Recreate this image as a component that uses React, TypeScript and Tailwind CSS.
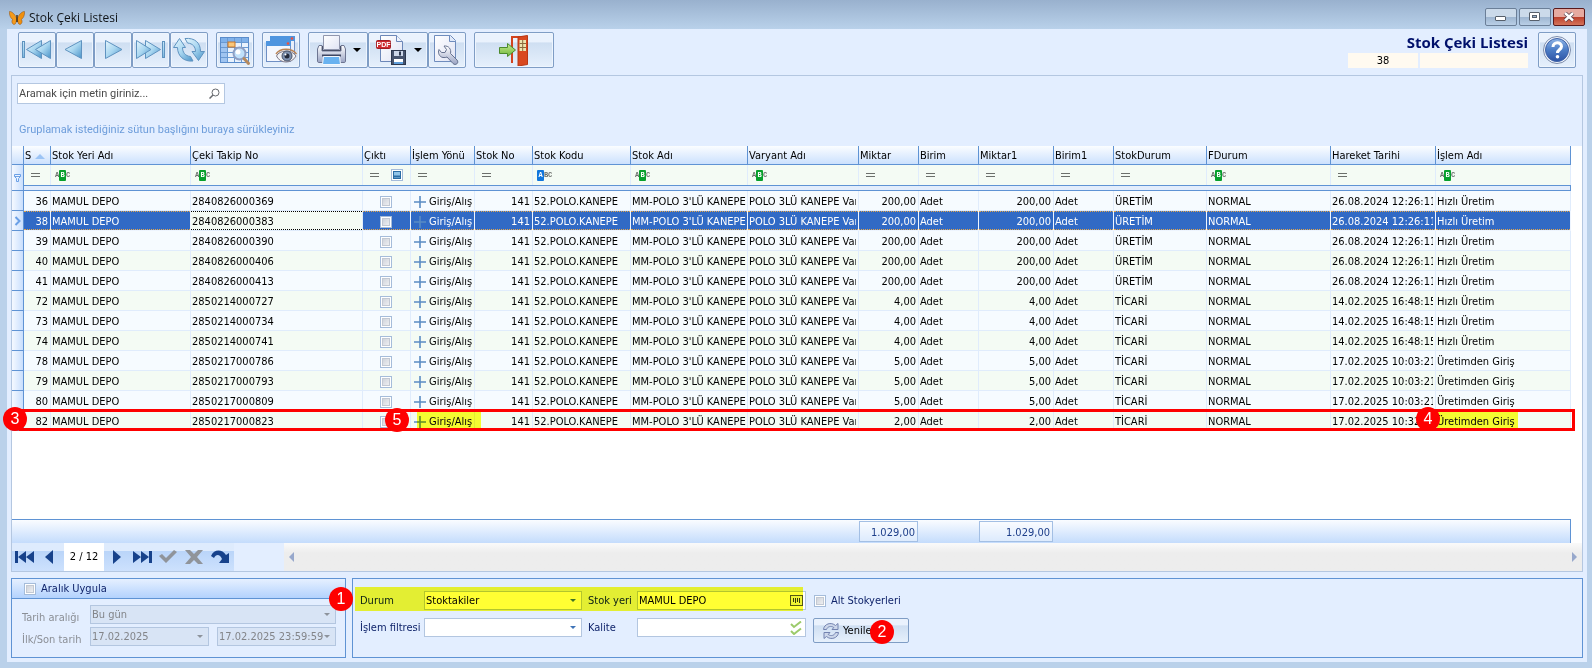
import { Fragment } from 'react'
import type { ReactNode } from 'react'

type Column = {
  title: string
  width: string
  filter: 'eq' | 'abc' | 'start'
}

const columns: Column[] = [
  { title: 'S', width: 'w-[27px]', filter: 'eq' },
  { title: 'Stok Yeri Adı', width: 'w-[140px]', filter: 'abc' },
  { title: 'Çeki Takip No', width: 'w-[172px]', filter: 'abc' },
  { title: 'Çıktı', width: 'w-[48px]', filter: 'eq' },
  { title: 'İşlem Yönü', width: 'w-[64px]', filter: 'eq' },
  { title: 'Stok No', width: 'w-[58px]', filter: 'eq' },
  { title: 'Stok Kodu', width: 'w-[98px]', filter: 'start' },
  { title: 'Stok Adı', width: 'w-[117px]', filter: 'abc' },
  { title: 'Varyant Adı', width: 'w-[111px]', filter: 'abc' },
  { title: 'Miktar', width: 'w-[60px]', filter: 'eq' },
  { title: 'Birim', width: 'w-[60px]', filter: 'eq' },
  { title: 'Miktar1', width: 'w-[75px]', filter: 'eq' },
  { title: 'Birim1', width: 'w-[60px]', filter: 'eq' },
  { title: 'StokDurum', width: 'w-[93px]', filter: 'eq' },
  { title: 'FDurum', width: 'w-[124px]', filter: 'abc' },
  { title: 'Hareket Tarihi', width: 'w-[105px]', filter: 'eq' },
  { title: 'İşlem Adı', width: 'w-auto', filter: 'abc' },
]

const rows = [
  { id: 36, no: '2840826000369', qty: '200,00', status: 'ÜRETİM', date: '26.08.2024 12:26:11', op: 'Hızlı Üretim' },
  { id: 38, no: '2840826000383', qty: '200,00', status: 'ÜRETİM', date: '26.08.2024 12:26:11', op: 'Hızlı Üretim' },
  { id: 39, no: '2840826000390', qty: '200,00', status: 'ÜRETİM', date: '26.08.2024 12:26:11', op: 'Hızlı Üretim' },
  { id: 40, no: '2840826000406', qty: '200,00', status: 'ÜRETİM', date: '26.08.2024 12:26:11', op: 'Hızlı Üretim' },
  { id: 41, no: '2840826000413', qty: '200,00', status: 'ÜRETİM', date: '26.08.2024 12:26:11', op: 'Hızlı Üretim' },
  { id: 72, no: '2850214000727', qty: '4,00', status: 'TİCARİ', date: '14.02.2025 16:48:15', op: 'Hızlı Üretim' },
  { id: 73, no: '2850214000734', qty: '4,00', status: 'TİCARİ', date: '14.02.2025 16:48:15', op: 'Hızlı Üretim' },
  { id: 74, no: '2850214000741', qty: '4,00', status: 'TİCARİ', date: '14.02.2025 16:48:15', op: 'Hızlı Üretim' },
  { id: 78, no: '2850217000786', qty: '5,00', status: 'TİCARİ', date: '17.02.2025 10:03:21', op: 'Üretimden Giriş' },
  { id: 79, no: '2850217000793', qty: '5,00', status: 'TİCARİ', date: '17.02.2025 10:03:21', op: 'Üretimden Giriş' },
  { id: 80, no: '2850217000809', qty: '5,00', status: 'TİCARİ', date: '17.02.2025 10:03:21', op: 'Üretimden Giriş' },
  { id: 82, no: '2850217000823', qty: '2,00', status: 'TİCARİ', date: '17.02.2025 10:32:05', op: 'Üretimden Giriş' },
]

const SELECTED_ID = 38

const checkboxClass =
  'size-3 shrink-0 appearance-none border border-[#a5bcda] bg-linear-to-br from-[#c6cbd4] to-[#f8f8f9] shadow-[inset_0_0_0_1px_#fff,inset_0_0_0_2px_#c3c9d3]'

function Gradients() {
  return (
    <svg width="0" height="0" className="absolute" aria-hidden="true">
      <defs>
        <linearGradient id="sky" x1="0" y1="0" x2="1" y2="1">
          <stop offset="0" stopColor="#e6f6fd" />
          <stop offset="0.5" stopColor="#a8d6f0" />
          <stop offset="1" stopColor="#4a93c8" />
        </linearGradient>
        <linearGradient id="steel" x1="0" y1="0" x2="0" y2="1">
          <stop offset="0" stopColor="#ffffff" />
          <stop offset="1" stopColor="#9aa4c4" />
        </linearGradient>
        <linearGradient id="paper" x1="0" y1="0" x2="1" y2="1">
          <stop offset="0" stopColor="#ffffff" />
          <stop offset="1" stopColor="#dfe3f4" />
        </linearGradient>
        <linearGradient id="help" x1="0" y1="0" x2="0" y2="1">
          <stop offset="0" stopColor="#8fb4e6" />
          <stop offset="0.5" stopColor="#4b7cc6" />
          <stop offset="1" stopColor="#2c53a4" />
        </linearGradient>
        <linearGradient id="leaf" x1="0" y1="0" x2="0" y2="1">
          <stop offset="0" stopColor="#c6e88e" />
          <stop offset="1" stopColor="#6fb83c" />
        </linearGradient>
      </defs>
    </svg>
  )
}

function Icon({ children, size = 32, className = '' }: { children: ReactNode; size?: number; className?: string }) {
  return (
    <svg width={size} height={size} viewBox={`0 0 ${size} ${size}`} className={`shrink-0 ${className}`} aria-hidden="true">
      {children}
    </svg>
  )
}

function FirstIcon() {
  return (
    <Icon>
      <g fill="url(#sky)" stroke="#5f93c0">
        <rect x="1.5" y="7.5" width="2" height="16" />
        <path d="M20.5 6.5V24.5L5.5 15.5Z" />
        <path d="M29.5 6.5V24.5L14.5 15.5Z" />
      </g>
    </Icon>
  )
}

function PrevIcon() {
  return (
    <Icon>
      <path d="M22.5 6.5V24.5L6 15.5Z" fill="url(#sky)" stroke="#5f93c0" />
    </Icon>
  )
}

function NextIcon() {
  return (
    <Icon>
      <path d="M8.5 6.5V24.5L25 15.5Z" fill="url(#sky)" stroke="#5f93c0" />
    </Icon>
  )
}

function LastIcon() {
  return (
    <Icon>
      <g fill="url(#sky)" stroke="#5f93c0">
        <rect x="27.5" y="7.5" width="2" height="16" />
        <path d="M10.5 6.5V24.5L25.5 15.5Z" />
        <path d="M1.5 6.5V24.5L16 15.5Z" />
      </g>
    </Icon>
  )
}

function ReloadIcon() {
  return (
    <Icon>
      <g fill="url(#sky)" stroke="#5f93c0" strokeLinejoin="round">
        <path d="M6.5 4.5L12.5 13.5H9.5C9.5 18 12 22 17.5 22.5L20 27C11 28 4.5 22 4.5 13.5H0.5Z" />
        <path d="M25.5 26.5L31.5 17.5H27.5C27.5 9 22 3.5 12 4.5L14.5 9C20 9.5 22.5 13 22.5 17.5H19Z" />
      </g>
    </Icon>
  )
}

function GridSearchIcon() {
  return (
    <Icon>
      <rect x="1.5" y="3.5" width="28" height="25" fill="#e9f2fd" stroke="#5a8ccb" />
      <rect x="2" y="4" width="27" height="4" fill="#7fb1ea" />
      <rect x="2" y="8" width="6" height="20" fill="#9fc4f0" />
      <path d="M8.5 4V28M15.5 4V28M22.5 4V28M2 8.5H29M2 13.5H29M2 18.5H29M2 23.5H29" stroke="#6a9ad2" />
      <rect x="9" y="8" width="7" height="5" fill="#f9c77a" stroke="#c8762b" />
      <circle cx="20.5" cy="19.5" r="6" fill="#bfe0fb" stroke="#8e9fc4" strokeWidth="2" />
      <circle cx="19" cy="18" r="2.5" fill="#ffffff" />
      <path d="M25 24.5L29.5 29.5" stroke="#b58a5f" strokeWidth="3" strokeLinecap="round" />
    </Icon>
  )
}

function PreviewIcon() {
  return (
    <Icon>
      <rect x="5.5" y="2.5" width="24" height="20" fill="#e9effa" stroke="#6f8fc4" />
      <rect x="5" y="2" width="25" height="5" fill="#4f95df" />
      <rect x="1.5" y="7.5" width="24" height="20" fill="#f4f7fe" stroke="#6f8fc4" />
      <rect x="1" y="7" width="25" height="5" fill="#4f95df" />
      <circle cx="27" cy="4.5" r="1.3" fill="#f0513d" />
      <circle cx="23" cy="9.5" r="1.3" fill="#f0513d" />
      <path d="M11.5 22C14 16 27 15 31 22C27 30 15 30 11.5 22Z" fill="#f3f3f6" stroke="#7d7886" />
      <path d="M11 20C15 13.5 27 13.5 31.5 20" fill="none" stroke="#b98558" strokeWidth="1.5" />
      <circle cx="22" cy="22" r="5" fill="#7f93b2" stroke="#4a5468" />
      <circle cx="22" cy="22" r="2.5" fill="#232b3c" />
      <circle cx="20.5" cy="20.5" r="1" fill="#ffffff" />
    </Icon>
  )
}

function PrinterIcon() {
  return (
    <Icon>
      <path d="M4 11.5L2.5 15V27C2.5 28 3 28.5 4 28.5H29C30 28.5 30.5 28 30.5 27V15L29 11.5H26V17H7V11.5Z" fill="url(#steel)" stroke="#6d7591" />
      <path d="M8.5 1.5H24.5V15.5H8.5Z" fill="url(#paper)" stroke="#9096ad" />
      <path d="M7.5 12V16.5H25.5V12" fill="none" stroke="#4b5168" />
      <path d="M7 21.5H26" stroke="#3f4762" strokeWidth="2" />
      <path d="M8.5 22.5H24.5L25.5 30.5H7.5Z" fill="#69b2f0" stroke="#f4f8fd" />
    </Icon>
  )
}

function PdfSaveIcon() {
  return (
    <Icon>
      <path d="M4.5 1.5H20.5L26.5 7.5V27.5H4.5Z" fill="url(#paper)" stroke="#6c87b8" />
      <path d="M20.5 1.5V7.5H26.5" fill="#eef3fc" stroke="#6c87b8" />
      <rect x="0.5" y="6.5" width="14" height="8" rx="1" fill="#cf2a30" stroke="#a01d24" />
      <text x="7.5" y="13" fontSize="7" fontWeight="bold" fontFamily="Liberation Sans, sans-serif" textAnchor="middle" fill="#ffffff">PDF</text>
      <rect x="15.5" y="16.5" width="14" height="14" fill="#46536d" stroke="#2c374d" />
      <rect x="18" y="17" width="9" height="5" fill="#ccd6e8" />
      <rect x="23" y="17.5" width="2" height="4" fill="#2c374d" />
      <rect x="18" y="25" width="9" height="5" fill="#ffffff" />
      <rect x="18" y="28" width="9" height="2" fill="#5f9edb" />
    </Icon>
  )
}

function SettingsPageIcon() {
  return (
    <Icon>
      <path d="M3.5 1.5H19.5L24.5 6.5V27.5H3.5Z" fill="url(#paper)" stroke="#6f8cbd" />
      <path d="M18.5 1.5V7.5H24.5" fill="#dfe9f9" stroke="#6f8cbd" />
      <path
        d="M13 12L15.5 15.5L14 18.5L10.5 18.5L8 15.5C6.5 19 8.5 23 12 23.5C13.5 23.8 15 23.5 16 23L22 29.5C24.5 32 28.5 29 26 26L19.5 19.5C20.5 15.5 18 11.5 13 12Z"
        fill="url(#steel)"
        stroke="#66728f"
        strokeLinejoin="round"
      />
    </Icon>
  )
}

function DoorIcon() {
  return (
    <Icon>
      <path d="M14 29V3H29" fill="none" stroke="#d3441f" strokeWidth="2" />
      <path d="M20 3L29.5 1.5V30.5L20 32Z" fill="#d9481f" stroke="#b93714" />
      <path d="M21.5 6H28V17H21.5Z" fill="#eee5b0" />
      <path d="M24.7 6V17M21.5 9.5H28M21.5 13.5H28" stroke="#8a6a3c" />
      <path d="M1.5 13.5H9.5V9.5L17.5 16L9.5 22.5V19.5H1.5Z" fill="url(#leaf)" stroke="#4b8a2c" />
    </Icon>
  )
}

function HelpIcon() {
  return (
    <Icon>
      <circle cx="16" cy="16" r="13.5" fill="#f2f6fd" stroke="#7c8cab" />
      <circle cx="16" cy="16" r="11.5" fill="url(#help)" stroke="#3f62a8" />
      <path d="M12 13C12 7.5 20.5 7.5 20.5 12.5C20.5 15.5 16.5 15.5 16.5 19" fill="none" stroke="#ffffff" strokeWidth="3" />
      <circle cx="16.5" cy="22.8" r="1.8" fill="#ffffff" />
    </Icon>
  )
}

function ButterflyIcon() {
  return (
    <Icon size={16}>
      <path d="M7.5 8C6 4 2 1 0.5 1.5C0 5 2 9 4 9.5C2 10.5 3 14 5 14.5C7 14.5 7.5 11 7.8 9Z" fill="#f59a1b" stroke="#8a4c12" strokeWidth="0.5" />
      <path d="M8.5 8C10 4 14 1 15.5 1.5C16 5 14 9 12 9.5C14 10.5 13 14 11 14.5C9 14.5 8.5 11 8.2 9Z" fill="#f0900f" stroke="#8a4c12" strokeWidth="0.5" />
      <path d="M8 5V12" stroke="#40301c" strokeWidth="1.5" />
    </Icon>
  )
}

function ToolButton({ label, children, className = 'w-[38px]' }: { label: string; children: ReactNode; className?: string }) {
  return (
    <button
      type="button"
      aria-label={label}
      className={`flex h-9 items-center justify-center gap-[6px] rounded-xs border border-[#7f9dc5] bg-linear-to-b from-[#eaf2fd] from-25% via-[#cfdff2] via-30% to-[#e6f0fc] shadow-[inset_0_0_0_1px_#eef5fe] ${className}`}
    >
      {children}
    </button>
  )
}

function Caret() {
  return (
    <svg width="8" height="4" viewBox="0 0 8 4" className="shrink-0 text-black" aria-hidden="true">
      <path d="M0 0H8L4 4Z" fill="currentColor" />
    </svg>
  )
}

function TitleBar() {
  return (
    <header className="flex h-[29px] items-center justify-between bg-linear-to-b from-[#99b1ce] to-[#b9d1ea] pr-[7px] pl-[9px]">
      <div className="flex items-center gap-1 pt-[6px]">
        <ButterflyIcon />
        <span className="font-['Open_Sans',sans-serif] text-[12px] leading-4 text-[#101418]">Stok Çeki Listesi</span>
      </div>
      <div className="flex gap-[2px] pt-1">
        <button type="button" aria-label="Küçült" className="flex h-[18px] w-8 items-center justify-center rounded-xs border border-[#6b7f98] bg-linear-to-b from-[#cbdaea] from-50% via-[#9db5d0] via-50% to-[#b9cfe6]">
          <svg width="12" height="6" viewBox="0 0 12 6" className="mt-1">
            <rect x="0.5" y="0.5" width="10" height="4" rx="0.5" fill="#ffffff" stroke="#57606c" />
          </svg>
        </button>
        <button type="button" aria-label="Ekranı kapla" className="flex h-[18px] w-8 items-center justify-center rounded-xs border border-[#6b7f98] bg-linear-to-b from-[#cbdaea] from-50% via-[#9db5d0] via-50% to-[#b9cfe6]">
          <svg width="12" height="10" viewBox="0 0 12 10">
            <rect x="0.5" y="0.5" width="10" height="8" rx="0.5" fill="#ffffff" stroke="#57606c" />
            <rect x="3.5" y="3.5" width="4" height="2" fill="#9db5d0" stroke="#57606c" />
          </svg>
        </button>
        <button type="button" aria-label="Kapat" className="flex h-[18px] w-8 items-center justify-center rounded-xs border border-[#5a1a1c] bg-linear-to-b from-[#e6aaa0] from-50% via-[#bb3d2a] via-50% to-[#d4745a]">
          <svg width="12" height="10" viewBox="0 0 12 10">
            <path d="M2 1L10 8.5M10 1L2 8.5" stroke="#57404a" strokeWidth="4" />
            <path d="M2 1L10 8.5M10 1L2 8.5" stroke="#ffffff" strokeWidth="2.4" />
          </svg>
        </button>
      </div>
    </header>
  )
}

function Toolbar() {
  return (
    <div className="flex h-[46px] items-start justify-between pt-[3px] pr-[11px] pl-[11px]">
      <div className="flex gap-2">
        <div className="flex">
          <ToolButton label="İlk kayıt"><FirstIcon /></ToolButton>
          <ToolButton label="Önceki kayıt"><PrevIcon /></ToolButton>
          <ToolButton label="Sonraki kayıt"><NextIcon /></ToolButton>
          <ToolButton label="Son kayıt"><LastIcon /></ToolButton>
          <ToolButton label="Yenile"><ReloadIcon /></ToolButton>
        </div>
        <ToolButton label="Kayıt ara"><GridSearchIcon /></ToolButton>
        <ToolButton label="Önizleme"><PreviewIcon /></ToolButton>
        <div className="flex">
          <ToolButton label="Yazdır" className="w-[60px]"><PrinterIcon /><Caret /></ToolButton>
          <ToolButton label="PDF kaydet" className="w-[60px] pl-[2px]"><PdfSaveIcon /><Caret /></ToolButton>
          <ToolButton label="Rapor ayarları"><SettingsPageIcon /></ToolButton>
        </div>
        <ToolButton label="Çıkış" className="w-20"><DoorIcon /></ToolButton>
      </div>
      <div className="flex gap-[10px]">
        <div className="flex flex-col items-end">
          <h1 className="h-[21px] font-['Open_Sans',sans-serif] text-[15px] leading-5 font-bold text-[#00106b]">Stok Çeki Listesi</h1>
          <div className="flex gap-[2px]">
            <output className="h-[15px] w-[70px] bg-[#fffaf0] text-center leading-4">38</output>
            <output className="h-[15px] w-[108px] bg-[#fffaf0]" />
          </div>
        </div>
        <ToolButton label="Yardım"><HelpIcon /></ToolButton>
      </div>
    </div>
  )
}

function FilterMark({ kind }: { kind: Column['filter'] }) {
  if (kind === 'eq') {
    return <span className="ml-[7px] block h-1 w-[9px] border-y border-[#6b6f6b]" />
  }
  const letters = ['A', 'B', 'C']
  const active = kind === 'abc' ? 1 : 0
  return (
    <span className="ml-1 flex items-center font-['Liberation_Mono',monospace] text-[7px] leading-[11px] font-bold text-[#6b6f6b]">
      {letters.map((letter, i) => (
        <span
          key={letter}
          className={
            i !== active
              ? 'w-1 text-center'
              : kind === 'abc'
                ? 'w-[7px] rounded-[1px] bg-[#07a02c] text-center text-white'
                : 'w-[7px] rounded-[1px] bg-[#1176dc] text-center text-white'
          }
        >
          {letter}
        </span>
      ))}
    </span>
  )
}

function Cell({ children, selected, focused, className = 'pr-[2px] pl-[1px]' }: { children?: ReactNode; selected: boolean; focused?: boolean; className?: string }) {
  let look = 'border-transparent text-black'
  if (selected) look = 'border-[#e5a64a] bg-[#316ac5] text-white'
  if (focused) look = 'border-black bg-[#f4fbf4] text-black'
  return (
    <td className={`border-r border-b p-0 ${selected && !focused ? 'border-[#eef5ff]' : 'border-[#e0ecfc]'}`}>
      <div className={`flex h-[19px] items-center border-y border-dotted pt-[2px] whitespace-nowrap ${look} ${className}`}>
        <span className="flex min-w-0 items-center gap-[3px] overflow-hidden">{children}</span>
      </div>
    </td>
  )
}

function Marker({ n, className }: { n: number; className: string }) {
  return (
    <span className={`absolute flex size-6 items-center justify-center rounded-full bg-[#fe0000] font-['Liberation_Sans',sans-serif] text-[16px] leading-none text-white ${className}`}>
      {n}
    </span>
  )
}

function StockTable() {
  return (
    <table className="w-full table-fixed border-separate border-spacing-0">
      <colgroup>
        <col className="w-3" />
        {columns.map((c) => (
          <col key={c.title} className={c.width} />
        ))}
      </colgroup>
      <thead>
        <tr className="h-[19px] bg-linear-to-b from-[#fbfdff] to-[#c9dffd]">
          <th className="border-r border-b border-[#5f93d4] p-0" />
          {columns.map((c) => (
            <th key={c.title} scope="col" className="overflow-hidden border-r border-b border-[#5f93d4] p-0 text-left font-normal whitespace-nowrap">
              <span className="flex items-center gap-1 pt-[2px] pl-[1px] leading-4">
                {c.title}
                {c.title === 'S' && (
                  <svg width="10" height="5" viewBox="0 0 10 5"><path d="M0 5L5 0L10 5Z" fill="#9cc4f5" /></svg>
                )}
              </span>
            </th>
          ))}
        </tr>
      </thead>
      <tbody>
        <tr className="h-5 bg-[#f4fbf4]">
          <td rowSpan={2} className="border-r border-b border-[#5f93d4] bg-linear-to-r from-[#f5f9ff] to-[#c9dffd] p-0">
            <svg width="8" height="10" viewBox="0 0 8 10" className="ml-[2px]">
              <path d="M0.5 1.5H6.5V3.5L4.5 5.5V8.5H2.5V5.5L0.5 3.5ZM0.5 3.5H6.5" fill="#eaf3ff" stroke="#6ba0e6" />
            </svg>
          </td>
          {columns.map((c) => (
            <td key={c.title} className="border-r border-[#e0ecfc] p-0">
              <span className="flex items-center">
                <FilterMark kind={c.filter} />
                {c.title === 'Çıktı' && (
                  <svg width="12" height="12" viewBox="0 0 12 12" className="ml-3">
                    <rect x="0.5" y="0.5" width="11" height="11" fill="#ffffff" stroke="#a5bcda" />
                    <rect x="2.5" y="2.5" width="7" height="7" fill="#8fc3e8" stroke="#2a6ca4" />
                    <path d="M2 7.5H10" stroke="#2a6ca4" strokeWidth="2" />
                  </svg>
                )}
              </span>
            </td>
          ))}
        </tr>
        <tr className="h-[6px]">
          <td colSpan={columns.length} className="border-y border-r border-[#5f93d4] bg-[#e3edfc] p-0" />
        </tr>
        {rows.map((r, i) => {
          const selected = r.id === SELECTED_ID
          return (
            <tr key={r.id} className={i % 2 === 0 ? 'bg-[#f6fbff]' : 'bg-[#f4fbf4]'}>
              <td className="border-r border-b border-[#5f93d4] bg-linear-to-r from-[#f5f9ff] to-[#c9dffd] p-0">
                {selected && (
                  <svg width="8" height="10" viewBox="0 0 8 10" className="ml-[2px]">
                    <path d="M1.5 1L5.5 5L1.5 9" fill="none" stroke="#6ba0e6" strokeWidth="2" />
                  </svg>
                )}
              </td>
              <Cell selected={selected} className="justify-end pr-[2px]">{r.id}</Cell>
              <Cell selected={selected}>MAMUL DEPO</Cell>
              <Cell selected={selected} focused={selected}>{r.no}</Cell>
              <Cell selected={selected} className="justify-center pr-[2px]">
                <input type="checkbox" aria-label={`Çıktı ${r.id}`} className={checkboxClass} />
              </Cell>
              <Cell selected={selected} className="pl-[3px]">
                <svg width="12" height="12" viewBox="0 0 12 12" className="shrink-0">
                  <path d="M6 0V12M0 6H12" stroke="#5a8cc4" strokeWidth="1.6" />
                </svg>
                Giriş/Alış
              </Cell>
              <Cell selected={selected} className="justify-end pr-[2px]">141</Cell>
              <Cell selected={selected}>52.POLO.KANEPE</Cell>
              <Cell selected={selected} className="pl-[1px]">MM-POLO 3'LÜ KANEPE</Cell>
              <Cell selected={selected}>POLO 3LÜ KANEPE Varyant</Cell>
              <Cell selected={selected} className="justify-end pr-[2px]">{r.qty}</Cell>
              <Cell selected={selected}>Adet</Cell>
              <Cell selected={selected} className="justify-end pr-[2px]">{r.qty}</Cell>
              <Cell selected={selected}>Adet</Cell>
              <Cell selected={selected}>{r.status}</Cell>
              <Cell selected={selected}>NORMAL</Cell>
              <Cell selected={selected}>{r.date}</Cell>
              <Cell selected={selected}>{r.op}</Cell>
            </tr>
          )
        })}
      </tbody>
    </table>
  )
}

function Summary() {
  return (
    <div className="mr-[11px] flex h-6 items-start border-t border-r border-[#5f93d4] bg-linear-to-b from-[#fafcff] to-[#c4dcfc] pt-[1px] pl-[847px] text-[#1e3f8a]">
      <output className="h-[21px] w-[59px] border border-[#a3bfe4] bg-[#ffffff60] pr-[2px] text-right leading-[22px]">1.029,00</output>
      <output className="ml-[61px] h-[21px] w-[74px] border border-[#a3bfe4] bg-[#ffffff60] pr-[2px] text-right leading-[22px]">1.029,00</output>
    </div>
  )
}

const navButtons = {
  before: [
    { label: 'İlk', d: 'M0 1H3V13H0ZM11 1V13L3 7ZM19 1V13L11 7Z', color: 'text-[#17428b]' },
    { label: 'Önceki', d: 'M12 0V14L4 7Z', color: 'text-[#17428b]' },
  ],
  after: [
    { label: 'Sonraki', d: 'M6 0V14L14 7Z', color: 'text-[#17428b]' },
    { label: 'Son', d: 'M0 1V13L8 7ZM8 1V13L16 7ZM16 1H19V13H16Z', color: 'text-[#17428b]' },
    { label: 'Onayla', d: 'M0 6L3 4L7 8L15 0L18 2L7 13Z', color: 'text-[#90949a]' },
    { label: 'İptal', d: 'M0 0H5L9 4L13 0H18L12 7L18 14H13L9 10L5 14H0L6 7Z', color: 'text-[#90949a]' },
    { label: 'Tazele', d: 'M0 6C3 -1 11 -1 15 5L18 3V13H8L11 9C9 4 5 4 3 8Z', color: 'text-[#17428b]' },
  ],
}

function NavButton({ label, d, color }: { label: string; d: string; color: string }) {
  return (
    <button type="button" aria-label={label} className={`flex h-full w-[26px] items-center justify-center ${color}`}>
      <svg width="20" height="14" viewBox="0 0 20 14"><path d={d} fill="currentColor" /></svg>
    </button>
  )
}

function Navigator() {
  return (
    <div className="flex h-7 items-stretch bg-[#e3eeff]">
      <div className="flex w-[222px] bg-linear-to-b from-[#deebfd] from-30% via-[#bad5f9] via-30% to-[#cde1fd]">
        {navButtons.before.map((b) => (
          <NavButton key={b.label} {...b} />
        ))}
        <span className="w-10 bg-white text-center leading-7">2 / 12</span>
        {navButtons.after.map((b) => (
          <NavButton key={b.label} {...b} />
        ))}
      </div>
      <div className="ml-[50px] flex flex-1 items-center justify-between bg-linear-to-b from-[#fafafa] to-[#ededed] to-35% px-[5px]">
        <svg width="5" height="10" viewBox="0 0 5 10"><path d="M5 0V10L0 5Z" fill="#97a8cc" /></svg>
        <svg width="5" height="10" viewBox="0 0 5 10"><path d="M0 0V10L5 5Z" fill="#97a8cc" /></svg>
      </div>
    </div>
  )
}

function Combo({ id, value, width, disabled = false }: { id: string; value: string; width: string; disabled?: boolean }) {
  return (
    <span className={`relative flex ${width}`}>
      <select
        id={id}
        aria-label={id}
        disabled={disabled}
        className={`h-[19px] w-full appearance-none rounded-none border border-[#b3c6e0] pr-3 pl-[1px] opacity-100 ${disabled ? 'bg-[#d8e4f5] text-[#838589]' : 'bg-white text-black'}`}
      >
        <option>{value}</option>
      </select>
      <svg width="6" height="3" viewBox="0 0 6 3" className="pointer-events-none absolute top-2 right-[6px]">
        <path d="M0 0H6L3 3Z" fill={disabled ? '#8d939c' : '#3f74b8'} />
      </svg>
    </span>
  )
}

function RangePanel() {
  return (
    <fieldset className="w-[335px] shrink-0 border border-[#5f93d4]">
      <label className="flex h-5 items-center gap-[5px] border-b border-[#5f93d4] bg-linear-to-b from-[#e6f0ff] to-[#b3d2fd] pl-3 text-[#10246b]">
        <input type="checkbox" className={checkboxClass} />
        Aralık Uygula
      </label>
      <div className="flex flex-col gap-[1px] pt-[6px] pr-[9px] pl-[10px] text-[#8b8f96]">
        <div className="flex items-start">
          <label htmlFor="Tarih aralığı" className="w-[68px] pt-[5px]">Tarih aralığı</label>
          <Combo id="Tarih aralığı" value="Bu gün" width="flex-1" disabled />
        </div>
        <div className="flex items-start">
          <label htmlFor="İlk tarih" className="w-[68px] pt-[5px]">İlk/Son tarih</label>
          <div className="flex flex-1 gap-2">
            <Combo id="İlk tarih" value="17.02.2025" width="w-[119px]" disabled />
            <Combo id="Son tarih" value="17.02.2025 23:59:59" width="w-[119px]" disabled />
          </div>
        </div>
      </div>
    </fieldset>
  )
}

function FilterPanel() {
  return (
    <section className="relative flex-1 border border-[#5f93d4] pt-3 pl-[7px] text-[#10246b]">
      <div className="grid grid-cols-[64px_158px_55px_169px_auto] items-start gap-y-2">
        <label htmlFor="Durum" className="leading-[19px]">Durum</label>
        <Combo id="Durum" value="Stoktakiler" width="w-[158px]" />
        <label htmlFor="stok-yeri" className="pl-[6px] leading-[19px]">Stok yeri</label>
        <span className="relative flex">
          <input id="stok-yeri" type="text" defaultValue="MAMUL DEPO" className="h-[19px] w-full border border-[#b3c6e0] bg-white px-[1px] text-black" />
          <svg width="13" height="11" viewBox="0 0 13 11" className="absolute top-1 right-[3px]">
            <rect x="0.5" y="0.5" width="12" height="10" fill="#eef3f8" stroke="#55585e" />
            <path d="M3.5 3V7M5.5 3V8M7.5 3V7M9.5 3V8" stroke="#33363c" />
          </svg>
        </span>
        <label className="flex h-[19px] items-center gap-[5px] pl-2">
          <input type="checkbox" className={checkboxClass} />
          Alt Stokyerleri
        </label>

        <label htmlFor="İşlem filtresi" className="leading-[19px] whitespace-nowrap">İşlem filtresi</label>
        <Combo id="İşlem filtresi" value="" width="w-[158px]" />
        <label htmlFor="kalite" className="pl-[6px] leading-[19px]">Kalite</label>
        <span className="relative flex">
          <input id="kalite" type="text" className="h-[19px] w-full border border-[#b3c6e0] bg-white px-[1px] text-black" />
          <svg width="12" height="14" viewBox="0 0 12 14" className="absolute top-[3px] right-1">
            <path d="M1 3L4 6L11 0.5M1 10L4 13L11 7.5" fill="none" stroke="#9ccb6b" strokeWidth="2" />
          </svg>
        </span>
        <span className="relative ml-[7px] w-24">
          <button type="button" className="flex h-[25px] w-24 items-center gap-1 rounded-xs border border-[#7f9dc5] bg-linear-to-b from-[#eaf2fd] from-25% via-[#cfdff2] via-30% to-[#e6f0fc] pl-[9px] text-black">
            <svg width="16" height="16" viewBox="0 0 16 16" aria-hidden="true">
              <g fill="#cdd7ea" stroke="#7383b0" strokeLinejoin="round">
                <path d="M0.5 6.5C1 1 8 -1.5 12.5 2.5L15 0.5V6.5H9L10.8 4.5C8 2.5 4.5 3.5 3.5 6.5Z" />
                <path d="M15.5 9.5C15 15 8 17.5 3.5 13.5L1 15.5V9.5H7L5.2 11.5C8 13.5 11.5 12.5 12.5 9.5Z" />
              </g>
            </svg>
            Yenile
          </button>
          <Marker n={2} className="top-[2px] left-[57px]" />
        </span>
      </div>
      <div className="pointer-events-none absolute top-2 left-[2px] h-6 w-[448px] bg-[#ffff33] mix-blend-multiply" />
      <Marker n={1} className="top-2 -left-6" />
    </section>
  )
}

export default function App() {
  return (
    <Fragment>
      <Gradients />
      <div className="flex min-h-screen flex-col bg-[#bad1ea] font-['DejaVu_Sans_Condensed','DejaVu_Sans',sans-serif] text-[11px] leading-4 text-black">
        <TitleBar />
        <main className="mr-[5px] mb-[6px] ml-[7px] flex flex-1 flex-col bg-[#e3eeff]">
          <Toolbar />
          <section className="mx-1 flex flex-1 flex-col border border-[#b4c7e1]">
            <div className="px-[5px] pt-[7px]">
              <div className="flex h-[21px] w-52 items-center border border-[#b4c7e1] bg-white pr-1 pl-[1px]">
                <input type="search" aria-label="Ara" placeholder="Aramak için metin giriniz..." className="min-w-0 flex-1 font-['Roboto',sans-serif] placeholder:text-[#4a4a4a]" />
                <svg width="11" height="11" viewBox="0 0 11 11">
                  <circle cx="6.5" cy="4.5" r="3.5" fill="none" stroke="#66696e" />
                  <path d="M4 7L0.5 10.5" stroke="#66696e" strokeWidth="1.5" />
                </svg>
              </div>
            </div>
            <p className="h-[42px] pt-[18px] pl-[7px] font-['Roboto',sans-serif] text-[#6d9ddb]">Gruplamak istediğiniz sütun başlığını buraya sürükleyiniz</p>
            <div className="relative flex-1 bg-white pr-[11px]">
              <StockTable />
              <div className="pointer-events-none absolute top-[266px] left-[405px] h-4 w-16 bg-[#ffff33] mix-blend-multiply" />
              <div className="pointer-events-none absolute top-[266px] right-16 h-4 w-[81px] bg-[#ffff33] mix-blend-multiply" />
              <div className="pointer-events-none absolute inset-x-[7px] top-[263px] h-[22px] border-[3px] border-[#fe0000]" />
              <Marker n={3} className="top-[261px] -left-[9px]" />
              <Marker n={5} className="top-[262px] left-[373px]" />
              <Marker n={4} className="top-[261px] right-[142px]" />
            </div>
            <div className="bg-white">
              <Summary />
            </div>
            <Navigator />
          </section>
          <div className="mx-1 mt-[6px] mb-1 flex h-20 gap-[6px]">
            <RangePanel />
            <FilterPanel />
          </div>
        </main>
      </div>
    </Fragment>
  )
}
